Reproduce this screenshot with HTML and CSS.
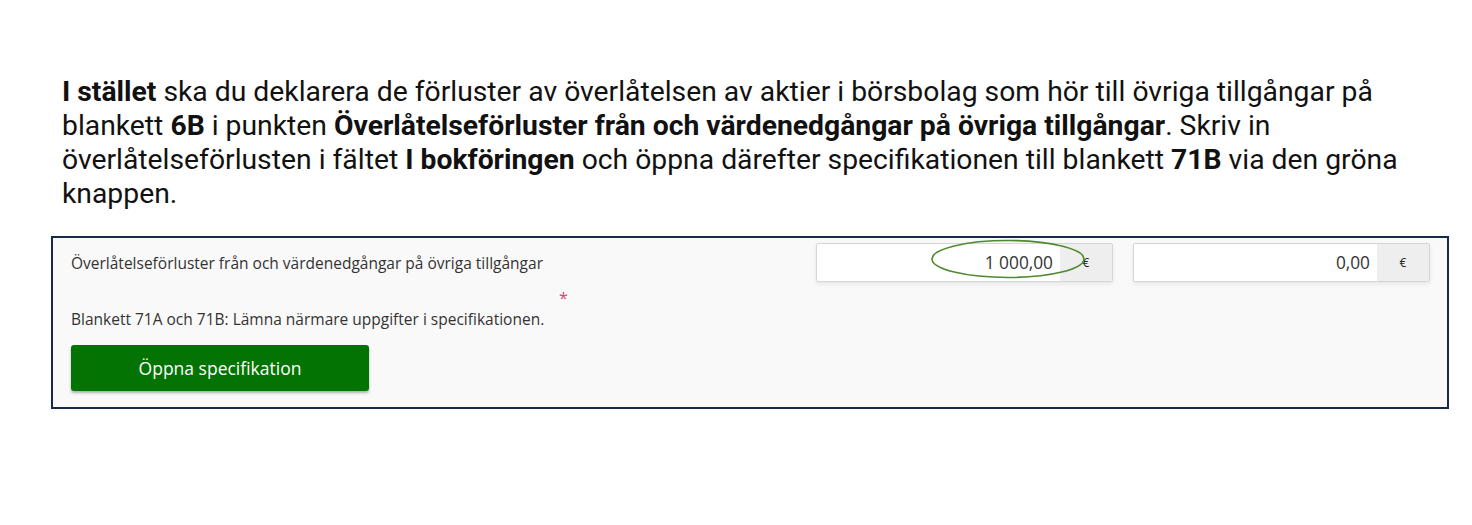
FILE: index.html
```html
<!DOCTYPE html>
<html lang="sv">
<head>
<meta charset="utf-8">
<title>Överlåtelseförluster</title>
<link rel="stylesheet" href="styles.css">
</head>
<body>
<p class="intro"><b>I stället</b> ska du deklarera de förluster av överlåtelsen av aktier i börsbolag som hör till övriga tillgångar på blankett <b>6B</b> i punkten <b>Överlåtelseförluster från och värdenedgångar på övriga tillgångar</b>. Skriv in överlåtelseförlusten i fältet <b>I bokföringen</b> och öppna därefter specifikationen till blankett <b>71B</b> via den gröna knappen.</p>

<section class="panel">
  <div class="row">
    <div class="label">Överlåtelseförluster från och värdenedgångar på övriga tillgångar</div>
    <div class="field">
      <div class="value">1 000,00</div>
      <div class="addon">€</div>
      <svg class="ring" width="156" height="40" viewBox="0 0 156 40"><ellipse cx="78" cy="20" rx="76" ry="18.5" fill="none" stroke="#4f8a2e" stroke-width="1.6"/></svg>
    </div>
    <div class="field">
      <div class="value">0,00</div>
      <div class="addon">€</div>
    </div>
  </div>
  <div class="spec">
    <div class="req">*</div>
    <div class="label">Blankett 71A och 71B: Lämna närmare uppgifter i specifikationen.</div>
    <button class="btn">Öppna specifikation</button>
  </div>
</section>
</body>
</html>
```
FILE: styles.css
```css
html, body {
  margin: 0;
  padding: 0;
  background: #ffffff;
}

.intro {
  margin: 0;
  padding: 75px 0 0 62px;
  width: 1380px;
  font-family: Roboto, "Liberation Sans", sans-serif;
  font-size: 28.3px;
  line-height: 34px;
  color: #111111;
}

.intro b {
  font-weight: 700;
}

.panel {
  margin: 25px 0 0 51px;
  width: 1398px;
  box-sizing: border-box;
  border: 2px solid #172a4b;
  background: #f9f9f9;
  padding: 5px 17px 16px 17px;
  font-family: "Open Sans", "Noto Sans", sans-serif;
}

.row {
  display: flex;
  align-items: center;
  gap: 20px;
}

.row .label {
  flex: 1;
  padding-left: 1px;
}

.label {
  font-size: 15.5px;
  line-height: 20px;
  color: #333333;
}

.field {
  position: relative;
  display: flex;
  width: 297px;
  height: 39px;
  box-sizing: border-box;
  border: 1px solid #d6d6d6;
  border-radius: 2px;
  background: #ffffff;
  box-shadow: 0 2px 4px rgba(0, 0, 0, 0.08);
}

.value {
  flex: 1;
  display: flex;
  align-items: center;
  justify-content: flex-end;
  padding-right: 7px;
  font-size: 17.3px;
  color: #333333;
}

.addon {
  width: 52px;
  display: flex;
  align-items: center;
  justify-content: center;
  background: #eeeeee;
  font-size: 12px;
  color: #222222;
}

.ring {
  position: absolute;
  left: 113px;
  top: -5px;
  pointer-events: none;
}

.spec {
  display: flex;
  flex-direction: column;
  align-items: flex-start;
  padding-left: 1px;
}

.req {
  margin: 9px 0 0 488px;
  color: #e0407a;
  font-size: 16px;
  line-height: 14px;
  height: 12px;
}

.spec .label {
  margin-top: 6px;
}

.btn {
  margin-top: 16px;
  width: 298px;
  height: 46px;
  border: none;
  border-radius: 3px;
  background: #037403;
  color: #ffffff;
  font-family: "Open Sans", "Noto Sans", sans-serif;
  font-size: 17.5px;
  box-shadow: 0 2px 3px rgba(0, 0, 0, 0.3);
}
```
